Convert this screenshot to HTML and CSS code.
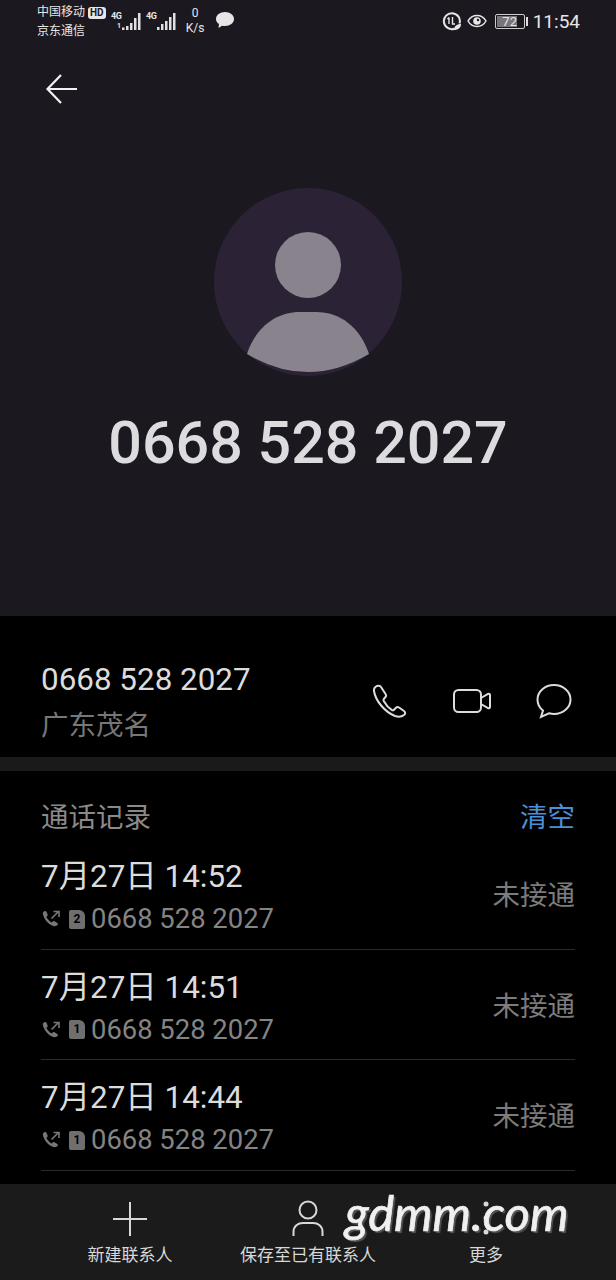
FILE: index.html
```html
<!DOCTYPE html>
<html>
  <head>
    <link rel="stylesheet" href="styles.css">
  </head>
  <body>
    <div class="phone">
      <div class="top">
        <div class="status">
          <div class="carriers">
            <div class="carrier">中国移动<span class="hd">HD</span></div>
            <div class="carrier">京东通信</div>
          </div>
          <div class="signal">
            <span class="net">4G</span>
            <span class="sim-tag">1</span>
            <svg width="20" height="18" viewBox="0 0 20 18"><path d="M0 15.500h2.500V18H0zM4 14h2.500v4H4zM8 11h2.500v7H8zM12 6h2.500v12H12zM16 1h2.500v17H16z" fill="#e0e0e0"/></svg>
          </div>
          <div class="signal">
            <span class="net">4G</span>
            <svg width="20" height="18" viewBox="0 0 20 18"><path d="M0 15h2.500v3H0zM4 12h2.500v6H4zM8 9h2.500v9H8zM12 5h2.500v13H12zM16 1h2.500v17H16z" fill="#e0e0e0"/></svg>
          </div>
          <div class="speed"><span>0</span><span>K/s</span></div>
          <svg class="bubble" width="20" height="18" viewBox="0 0 20 18"><path d="M10 1c5 0 9 3 9 7s-4 7-9 7c-1 0-2 0-3-.3L3.500 17l.5-4C2 11.700 1 10 1 8c0-4 4-7 9-7z" fill="#e6e6e6"/></svg>
          <div class="status-right">
            <svg width="20" height="20" viewBox="0 0 20 20"><path d="M17.500 12.500a8 8 0 1 0-5 5.200" fill="none" stroke="#e6e6e6" stroke-width="2"/><path d="M7 6.500V13M5.500 8 7 6.500M10.500 6v7h2.500" stroke="#e6e6e6" stroke-width="1.400" fill="none"/><path d="M12 19c0-3.500 2.500-6 7-6 0 3.500-2.500 6-7 6z" fill="#e6e6e6"/></svg>
            <svg width="20" height="14" viewBox="0 0 20 14"><path d="M1 7c2-3.500 5-5.500 9-5.500s7 2 9 5.500c-2 3.500-5 5.500-9 5.500S3 10.500 1 7z" fill="none" stroke="#e6e6e6" stroke-width="1.500"/><circle cx="10" cy="7" r="3.800" fill="#e6e6e6"/><circle cx="11" cy="6" r="1.200" fill="#1c1820"/></svg>
            <div class="battery"><div class="battery-body"><span class="battery-fill"></span><span class="battery-num">72</span></div><span class="battery-tip"></span></div>
            <span class="clock">11:54</span>
          </div>
        </div>
        <svg class="back" width="34" height="34" viewBox="0 0 34 34"><path d="M32 17H3M16 3 2.500 17 16 31" fill="none" stroke="#f2f2f2" stroke-width="2.200"/></svg>
        <div class="avatar">
          <svg width="188" height="188" viewBox="0 0 188 188">
            <circle cx="94" cy="94" r="94" fill="#2b2236"/>
            <circle cx="94" cy="77" r="33" fill="#88838c"/>
            <path d="M33 166C42 139 62 124 86 124h16c24 0 44 15 53 42Q94 202 33 166z" fill="#88838c"/>
          </svg>
        </div>
        <div class="big-number">0668 528 2027</div>
      </div>

      <div class="info">
        <div class="info-text">
          <div class="info-number">0668 528 2027</div>
          <div class="info-place">广东茂名</div>
        </div>
        <div class="actions">
          <svg width="36" height="36" viewBox="0 0 36 36"><path d="M4 3.500c-1.500 1-2.300 2.500-2 4.500 1.500 10 11 21 21 25 3 1 6.500 1 9-1 1.500-1.300 1.500-3 0-4l-5-3.500c-1-.7-2.200-.6-3 .2l-2 2c-.7.700-1.500.700-2.300.2-3-2-6-5.500-8-9-.4-.8-.3-1.600.3-2.200l1.500-1.700c.7-.8.800-1.900.2-2.800L9 4c-1-1.500-3.200-1.800-5-.5z" fill="none" stroke="#dcdcdc" stroke-width="2"/></svg>
          <svg width="38" height="24" viewBox="0 0 38 24"><rect x="1" y="1" width="27" height="22" rx="4.500" fill="none" stroke="#dcdcdc" stroke-width="2"/><path d="M28 9l7-4c1-.5 2 0 2 1v12c0 1-1 1.500-2 1l-7-4z" fill="none" stroke="#dcdcdc" stroke-width="2"/></svg>
          <svg width="36" height="36" viewBox="0 0 36 36"><path d="M18 2c9 0 16.500 6.300 16.500 14.500S27 31 18 31c-1.800 0-3.500-.3-5-.7L5 34l2-6.500C3.500 24.800 1.500 21 1.500 16.500 1.500 8.300 9 2 18 2z" fill="none" stroke="#dcdcdc" stroke-width="2"/></svg>
        </div>
      </div>
      <div class="divider"></div>

      <div class="log">
        <div class="log-head">
          <span class="log-title">通话记录</span>
          <span class="log-clear">清空</span>
        </div>
        <div class="log-row">
          <div>
            <div class="log-time">7月27日 14:52</div>
            <div class="log-sub">
              <svg width="20" height="20" viewBox="0 0 20 20"><path d="M3 2.500c-1 .7-1.500 1.700-1 3 1.500 5.500 5 9.500 10.500 11.500 1.500.5 3 0 4-1 .6-.8.500-1.500-.2-2l-2.800-1.800c-.6-.4-1.200-.3-1.700.2l-1 1c-2.500-1.300-4.300-3.300-5.500-5.500l1-1c.5-.5.600-1.200.2-1.700L5.500 2.800C4.900 2 3.900 1.900 3 2.500z" fill="#777"/><path d="M10.500 9.500l7-7M12.500 2.500H18V8" fill="none" stroke="#777" stroke-width="1.600"/></svg>
              <span class="sim">2</span>
              <span class="log-number">0668 528 2027</span>
            </div>
          </div>
          <span class="log-state">未接通</span>
        </div>
        <div class="log-row">
          <div>
            <div class="log-time">7月27日 14:51</div>
            <div class="log-sub">
              <svg width="20" height="20" viewBox="0 0 20 20"><path d="M3 2.500c-1 .7-1.500 1.700-1 3 1.500 5.500 5 9.500 10.500 11.500 1.500.5 3 0 4-1 .6-.8.500-1.500-.2-2l-2.800-1.800c-.6-.4-1.200-.3-1.700.2l-1 1c-2.500-1.300-4.300-3.300-5.500-5.500l1-1c.5-.5.600-1.200.2-1.700L5.500 2.800C4.900 2 3.900 1.900 3 2.500z" fill="#777"/><path d="M10.500 9.500l7-7M12.500 2.500H18V8" fill="none" stroke="#777" stroke-width="1.600"/></svg>
              <span class="sim">1</span>
              <span class="log-number">0668 528 2027</span>
            </div>
          </div>
          <span class="log-state">未接通</span>
        </div>
        <div class="log-row">
          <div>
            <div class="log-time">7月27日 14:44</div>
            <div class="log-sub">
              <svg width="20" height="20" viewBox="0 0 20 20"><path d="M3 2.500c-1 .7-1.500 1.700-1 3 1.500 5.500 5 9.500 10.500 11.500 1.500.5 3 0 4-1 .6-.8.500-1.500-.2-2l-2.800-1.800c-.6-.4-1.200-.3-1.700.2l-1 1c-2.500-1.300-4.300-3.300-5.500-5.500l1-1c.5-.5.600-1.200.2-1.700L5.500 2.800C4.900 2 3.900 1.900 3 2.500z" fill="#777"/><path d="M10.500 9.500l7-7M12.500 2.500H18V8" fill="none" stroke="#777" stroke-width="1.600"/></svg>
              <span class="sim">1</span>
              <span class="log-number">0668 528 2027</span>
            </div>
          </div>
          <span class="log-state">未接通</span>
        </div>
      </div>

      <div class="tabs">
        <div class="tab">
          <svg width="36" height="36" viewBox="0 0 36 36"><path d="M18 1v34M1 18h34" stroke="#d8d8d8" stroke-width="2" fill="none"/></svg>
          <span>新建联系人</span>
        </div>
        <div class="tab">
          <svg width="34" height="38" viewBox="0 0 34 38"><circle cx="17" cy="10" r="8.500" fill="none" stroke="#d8d8d8" stroke-width="2"/><path d="M2.500 36v-4c0-6 4.500-9 9.500-9h10c5 0 9.500 3 9.500 9v4" fill="none" stroke="#d8d8d8" stroke-width="2"/></svg>
          <span>保存至已有联系人</span>
        </div>
        <div class="tab">
          <svg width="8" height="38" viewBox="0 0 8 38"><circle cx="4" cy="4" r="2.500" fill="#d8d8d8"/><circle cx="4" cy="18" r="2.500" fill="#d8d8d8"/><circle cx="4" cy="32" r="2.500" fill="#d8d8d8"/></svg>
          <span>更多</span>
        </div>
      </div>
      <div class="watermark">gdmm.com</div>
    </div>
  </body>
</html>
```

FILE: styles.css
```css
* {
  box-sizing: border-box;
}

body {
  margin: 0;
  background: #000;
  font-family: Roboto, "Noto Sans CJK SC", sans-serif;
}

.phone {
  position: relative;
  width: 616px;
  height: 1280px;
  display: flex;
  flex-direction: column;
  overflow: hidden;
  background: #000;
}

.top {
  height: 616px;
  flex-shrink: 0;
  background: #1c1820;
  display: flex;
  flex-direction: column;
  align-items: center;
}

.status {
  width: 100%;
  height: 40px;
  padding: 3px 36px 0 37px;
  display: flex;
  align-items: flex-start;
  color: #e6e6e6;
}

.carriers {
  width: 74px;
  font-size: 12px;
  line-height: 19px;
}

.carrier {
  display: flex;
  align-items: center;
  white-space: nowrap;
}

.hd {
  margin-left: 3px;
  padding: 0 2px;
  height: 12px;
  border-radius: 3px;
  background: #e6e6e6;
  color: #1c1820;
  font-size: 10px;
  font-weight: 700;
  line-height: 12px;
}

.signal {
  position: relative;
  width: 31px;
  height: 30px;
  padding: 9px 0 0 11px;
}

.signal svg {
  display: block;
}

.signal + .signal {
  margin-left: 4px;
}

.net {
  position: absolute;
  left: 0;
  top: 8px;
  font-size: 9px;
  font-weight: 700;
  line-height: 10px;
  letter-spacing: -0.5px;
}

.sim-tag {
  position: absolute;
  left: 6px;
  top: 19px;
  font-size: 7px;
  font-weight: 700;
  line-height: 8px;
}

.speed {
  width: 24px;
  margin-left: 6px;
  padding-top: 3px;
  display: flex;
  flex-direction: column;
  align-items: center;
  font-size: 12px;
  line-height: 15px;
}

.bubble {
  margin: 8px 0 0 8px;
}

.status-right {
  margin-left: auto;
  height: 36px;
  display: flex;
  align-items: center;
  gap: 5px;
}

.battery {
  display: flex;
  align-items: center;
  margin-left: 3px;
}

.battery-body {
  position: relative;
  width: 30px;
  height: 15px;
  border: 1px solid #ccc;
  border-radius: 2px;
}

.battery-fill {
  position: absolute;
  left: 1px;
  top: 1px;
  bottom: 1px;
  width: 72%;
  background: #77747a;
}

.battery-num {
  position: absolute;
  left: 0;
  right: 0;
  top: 0;
  text-align: center;
  font-size: 13px;
  line-height: 13px;
  color: #e6e6e6;
}

.battery-tip {
  width: 2px;
  height: 9px;
  margin-left: 1px;
  background: #ddd;
}

.clock {
  font-size: 19px;
  color: #e6e6e6;
}

.back {
  align-self: flex-start;
  margin: 32px 0 0 45px;
}

.avatar {
  margin-top: 82px;
  width: 188px;
  height: 188px;
}

.avatar svg {
  display: block;
}

.big-number {
  margin-top: 32px;
  font-size: 59.2px;
  font-weight: 500;
  line-height: 70px;
  color: #dcdcdf;
  white-space: nowrap;
}

.info {
  height: 141px;
  flex-shrink: 0;
  padding: 44px 44px 0 41px;
  display: flex;
  justify-content: space-between;
  align-items: flex-start;
}

.info-number {
  font-size: 31.4px;
  line-height: 40px;
  color: #dcdcdc;
}

.info-place {
  margin-top: 8px;
  font-size: 27.5px;
  line-height: 36px;
  color: #777;
}

.actions {
  display: flex;
  align-items: center;
  gap: 45px;
  padding-top: 23px;
}

.divider {
  height: 14px;
  flex-shrink: 0;
  background: #1a1a1a;
}

.log {
  flex: 1;
  padding: 0 41px;
}

.log-head {
  height: 68px;
  padding-top: 29px;
  display: flex;
  justify-content: space-between;
  align-items: flex-start;
  font-size: 27.5px;
  line-height: 36px;
}

.log-title {
  color: #8a8a8a;
}

.log-clear {
  color: #4a90d9;
}

.log-row {
  height: 110.6px;
  padding-top: 15px;
  display: flex;
  justify-content: space-between;
  align-items: flex-start;
  border-bottom: 1px solid #2a2a2a;
}

.log-time {
  font-size: 31.4px;
  line-height: 46px;
  color: #dcdcdc;
  white-space: nowrap;
}

.log-sub {
  display: flex;
  align-items: center;
  height: 36px;
  padding-top: 2px;
}

.sim {
  width: 16px;
  height: 19px;
  margin-left: 8px;
  margin-right: 6px;
  border-radius: 2px 6px 2px 2px;
  background: #6f6f6f;
  color: #000;
  font-size: 12px;
  font-weight: 700;
  line-height: 19px;
  text-align: center;
}

.log-number {
  font-size: 27.4px;
  line-height: 36px;
  color: #848484;
}

.log-state {
  margin-top: 24px;
  font-size: 27.5px;
  line-height: 36px;
  color: #7c7c7c;
}

.tabs {
  height: 96px;
  flex-shrink: 0;
  background: #1b1b1b;
  padding: 16px 40px 0 40px;
  display: grid;
  grid-template-columns: 180px 176px 180px;
  color: #d8d8d8;
  font-size: 17px;
}

.tab {
  display: flex;
  flex-direction: column;
  align-items: center;
  white-space: nowrap;
}

.tab svg {
  flex-shrink: 0;
  height: 38px;
}

.tab span {
  margin-top: 5px;
  line-height: 24px;
}

.watermark {
  position: absolute;
  left: 345px;
  top: 1182px;
  font-family: Lato, sans-serif;
  font-size: 49px;
  font-style: italic;
  line-height: 60px;
  color: #f0f0f0;
  -webkit-text-stroke: 0.7px #f0f0f0;
  text-shadow: 2px 2px 1px #555;
}
```
